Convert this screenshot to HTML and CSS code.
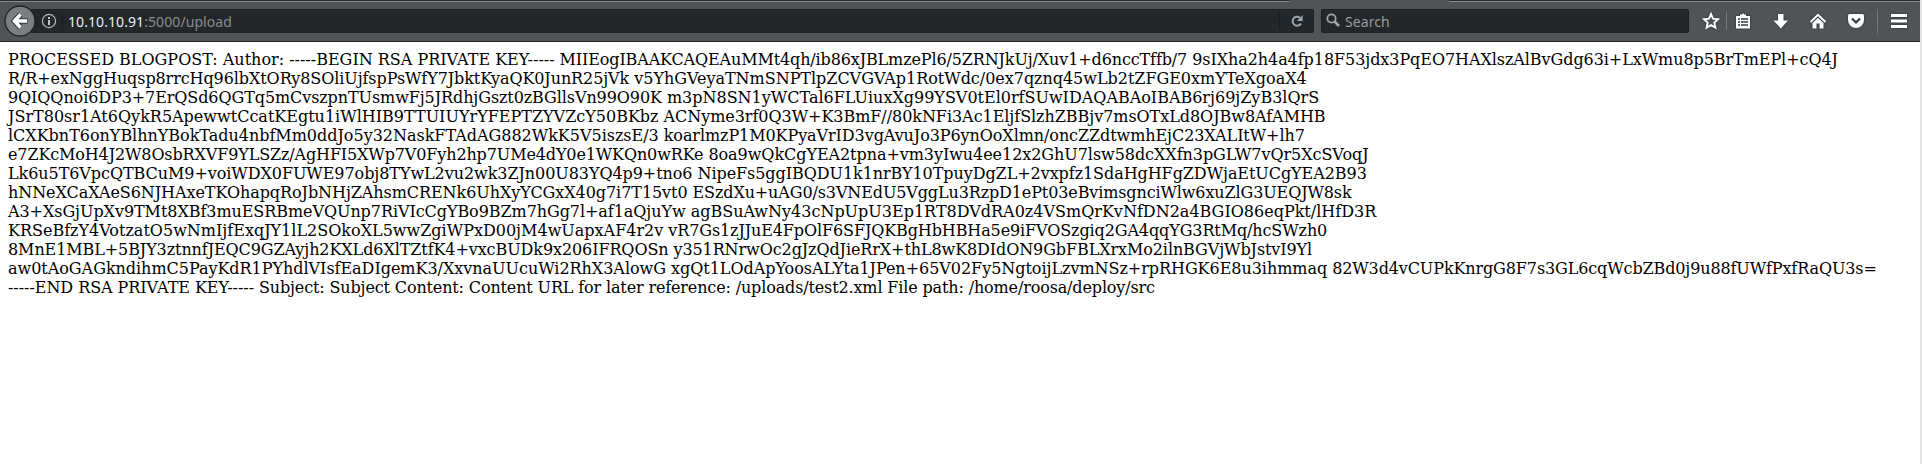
FILE: index.html
```
<!DOCTYPE html>
<html lang="en">
<head>
<meta charset="utf-8">
<title>10.10.10.91:5000/upload</title>
<link rel="stylesheet" href="styles.css">
</head>
<body>
<div class="window">
<header class="chrome">
  <div class="tabline"><span class="tabline-left"></span><span class="tabline-right"></span></div>
  <div class="toolbar">
    <div class="back"><svg width="32" height="32" viewBox="0 0 32 32"><circle cx="16" cy="16" r="15" fill="#7a7e80" stroke="#1e2224" stroke-width="1.3"/><path d="M16.5 9.5L10.500 16l6 6.500M11 16h12.500" fill="none" stroke="#33373a" stroke-width="5.600"/><path d="M16.500 9.500L10.500 16l6 6.500M11 16h12" fill="none" stroke="#fff" stroke-width="3.600"/></svg></div>
    <div class="urlbar">
      <svg class="info" width="16" height="16" viewBox="0 0 16 16"><circle cx="8" cy="8" r="6.600" fill="none" stroke="#b4b6b7" stroke-width="1.200"/><path d="M8 7v5M8 4v2" stroke="#c8cacb" stroke-width="1.900"/></svg>
      <span class="divider"></span>
      <span class="url">10.10.10.91<span class="dim">:5000/upload</span></span>
      <span class="divider reload-divider"></span>
      <svg class="reload" width="14" height="14" viewBox="0 0 14 14"><path d="M11 9.500A4.500 4.500 0 1 1 9.800 3.600" fill="none" stroke="#9aa5ad" stroke-width="2"/><path d="M12.600 1v6H6.800z" fill="#9aa5ad"/></svg>
    </div>
    <div class="search">
      <svg width="16" height="16" viewBox="0 0 16 16"><circle cx="5.500" cy="5.500" r="4.200" fill="none" stroke="#a4a6a7" stroke-width="1.800"/><path d="M8.500 8.500l4.500 4.500" stroke="#a4a6a7" stroke-width="2.600"/></svg>
      <span>Search</span>
    </div>
    <nav class="actions">
      <svg class="star" width="18" height="18" viewBox="0 0 18 18"><path d="M9 2l2.100 4.600 5 .6-3.700 3.400 1 5L9 13.100l-4.400 2.500 1-5L1.900 7.200l5-.6z" fill="#505456" stroke="#fff" stroke-width="1.900"/></svg>
      <span class="sep"></span>
      <svg class="list" width="16" height="16" viewBox="0 0 16 16"><path d="M1 3H5V1.500h2L8 0l1 1.500h2V3h4v12.500H1z" fill="#fff"/><path d="M3 6h2M6 6h7M3 9h2M6 9h7M3 12h2M6 12h7" stroke="#34383a" stroke-width="1.300"/></svg>
      <svg class="down" width="16" height="16" viewBox="0 0 16 16"><path d="M5 1h5.500v6.500H15L7.800 15.500.500 7.500H5z" fill="#fff"/></svg>
      <svg class="home" width="18" height="16" viewBox="0 0 18 16"><path d="M1.500 9L9 1.800 16.500 9" fill="none" stroke="#fff" stroke-width="2"/><path d="M3.500 10L9 4.800l5.500 5.200v5.500h-4v-5h-3v5h-4z" fill="#fff"/></svg>
      <svg class="pocket" width="18" height="16" viewBox="0 0 18 16"><path d="M2.500 1h13Q17 1 17 2.500V7a8 8 0 0 1-16 0V2.500Q1 1 2.500 1z" fill="#fff"/><path d="M5 5.500l4 4 4-4" fill="none" stroke="#34383a" stroke-width="2.200"/></svg>
      <span class="sep tall"></span>
      <svg class="menu" width="18" height="16" viewBox="0 0 18 16"><path d="M1 2.500h16M1 8h16M1 13.500h16" stroke="#fff" stroke-width="3"/></svg>
    </nav>
  </div>
</header>
<main class="page">PROCESSED BLOGPOST: Author: -----BEGIN RSA PRIVATE KEY-----<span class="t13"> MIIEogIBAAKCAQEAuMMt4qh/ib86xJBLmzePl6/5ZRNJkUj/Xuv1+d6nccTffb/7</span><span class="t7"> 9sIXha2h4a4fp18F53jdx3PqEO7HAXlszAlBvGdg63i+LxWmu8p5BrTmEPl+cQ4J</span>
<span class="t9">R/R+exNggHuqsp8rrcHq96lbXtORy8SOliUjfspPsWfY7JbktKyaQK0JunR25jVk</span><span class="t3"> v5YhGVeyaTNmSNPTlpZCVGVAp1RotWdc/0ex7qznq45wLb2tZFGE0xmYTeXgoaX4</span>
<span class="t9">9QIQQnoi6DP3+7ErQSd6QGTq5mCvszpnTUsmwFj5JRdhjGszt0zBGllsVn99O90K</span><span class="t1"> m3pN8SN1yWCTal6FLUiuxXg99YSV0tEl0rfSUwIDAQABAoIBAB6rj69jZyB3lQrS</span>
JSrT80sr1At6QykR5ApewwtCcatKEgtu1iWlHIB9TTUIUYrYFEPTZYVZcY50BKbz<span class="t5"> ACNyme3rf0Q3W+K3BmF//80kNFi3Ac1EljfSlzhZBBjv7msOTxLd8OJBw8AfAMHB</span>
<span class="t2">lCXKbnT6onYBlhnYBokTadu4nbfMm0ddJo5y32NaskFTAdAG882WkK5V5iszsE/3</span><span class="t8"> koarlmzP1M0KPyaVrID3vgAvuJo3P6ynOoXlmn/oncZZdtwmhEjC23XALItW+lh7</span>
<span class="t13">e7ZKcMoH4J2W8OsbRXVF9YLSZz/AgHFI5XWp7V0Fyh2hp7UMe4dY0e1WKQn0wRKe</span><span class="t6"> 8oa9wQkCgYEA2tpna+vm3yIwu4ee12x2GhU7lsw58dcXXfn3pGLW7vQr5XcSVoqJ</span>
<span class="t7">Lk6u5T6VpcQTBCuM9+voiWDX0FUWE97obj8TYwL2vu2wk3ZJn00U83YQ4p9+tno6</span><span class="t7"> NipeFs5ggIBQDU1k1nrBY10TpuyDgZL+2vxpfz1SdaHgHFgZDWjaEtUCgYEA2B93</span>
<span class="t7">hNNeXCaXAeS6NJHAxeTKOhapqRoJbNHjZAhsmCRENk6UhXyYCGxX40g7i7T15vt0</span><span class="t12"> ESzdXu+uAG0/s3VNEdU5VggLu3RzpD1ePt03eBvimsgnciWlw6xuZlG3UEQJW8sk</span>
<span class="t7">A3+XsGjUpXv9TMt8XBf3muESRBmeVQUnp7RiVIcCgYBo9BZm7hGg7l+af1aQjuYw</span> agBSuAwNy43cNpUpU3Ep1RT8DVdRA0z4VSmQrKvNfDN2a4BGIO86eqPkt/lHfD3R
KRSeBfzY4VotzatO5wNmIjfExqJY1lL2SOkoXL5wwZgiWPxD00jM4wUapxAF4r2v<span class="t11"> vR7Gs1zJJuE4FpOlF6SFJQKBgHbHBHa5e9iFVOSzgiq2GA4qqYG3RtMq/hcSWzh0</span>
<span class="t9">8MnE1MBL+5BJY3ztnnfJEQC9GZAyjh2KXLd6XlTZtfK4+vxcBUDk9x206IFRQOSn</span><span class="t10"> y351RNrwOc2gJzQdJieRrX+thL8wK8DIdON9GbFBLXrxMo2ilnBGVjWbJstvI9Yl</span>
<span class="t3">aw0tAoGAGkndihmC5PayKdR1PYhdlVIsfEaDIgemK3/XxvnaUUcuWi2RhX3AlowG</span><span class="t4"> xgQt1LOdApYoosALYta1JPen+65V02Fy5NgtoijLzvmNSz+rpRHGK6E8u3ihmmaq</span><span class="t12"> 82W3d4vCUPkKnrgG8F7s3GL6cqWcbZBd0j9u88fUWfPxfRaQU3s=</span>
<span class="t5">-----END RSA PRIVATE KEY-----</span><span class="t14"> Subject: Subject Content: Content URL for later reference: /uploads/test2.xml File path: /home/roosa/deploy/src</span></main>
</div>
</body>
</html>
```
FILE: styles.css
```
body { margin: 0; background: #e4e4e4; overflow: hidden; }
.window { width: 1920px; height: 464px; background: #fff; }
.chrome { height: 42px; box-sizing: border-box; background: #505456; border-bottom: 1px solid #1f2325; }
.tabline { height: 2px; display: flex; justify-content: space-between; }
.tabline span { height: 1px; background: #24282a; border-bottom: 1px solid #8e9192; }
.tabline-left { width: 1289px; }
.tabline-right { width: 471px; }
.toolbar { height: 38px; display: flex; align-items: center; padding-left: 4px; font: 14px "Noto Sans", sans-serif; letter-spacing: 0.08px; }
.back { width: 32px; height: 32px; z-index: 1; }
.urlbar, .search { height: 24px; box-sizing: border-box; display: flex; align-items: center; background: #232729; border: 1px solid #1c2022; border-radius: 2px; }
.urlbar { width: 1284px; margin-left: -6px; padding-left: 10px; }
.divider { width: 1px; height: 16px; background: #181c1e; margin: 0 5px; }
.url { color: #eee; }
.dim { color: #8b8e8f; }
.reload-divider { margin-left: auto; margin-right: 10px; }
.reload { margin-right: 9px; }
.search { width: 368px; margin-left: 7px; padding-left: 4px; gap: 3px; color: #9a9d9e; }
.actions { flex: 1; display: flex; align-items: center; height: 38px; }
.actions svg { filter: drop-shadow(0 0 1px #24282a); }
.star { margin-left: 13px; }
.sep { width: 1px; height: 18px; background: #777b7d; margin-left: 6px; }
.list { margin-left: 8px; }
.down { margin-left: 22px; }
.home { margin-left: 20px; }
.pocket { margin-left: 20px; }
.tall { height: 34px; margin-left: 12px; background: linear-gradient(transparent, #777b7d 30%, #777b7d 70%, transparent); }
.menu { margin-left: 12px; }
.page { padding: 8px; font: 16px/19px "DejaVu Serif", serif; color: #000; white-space: pre; }

/* Letter tracking, in hundredths of a pixel */
.t1 { letter-spacing: -0.01px; }
.t2 { letter-spacing: -0.02px; }
.t3 { letter-spacing: -0.03px; }
.t4 { letter-spacing: -0.04px; }
.t5 { letter-spacing: -0.05px; }
.t6 { letter-spacing: -0.06px; }
.t7 { letter-spacing: -0.067px; }
.t8 { letter-spacing: -0.08px; }
.t9 { letter-spacing: -0.092px; }
.t10 { letter-spacing: -0.098px; }
.t11 { letter-spacing: -0.11px; }
.t12 { letter-spacing: -0.12px; }
.t13 { letter-spacing: -0.128px; }
.t14 { letter-spacing: -0.141px; }
```
